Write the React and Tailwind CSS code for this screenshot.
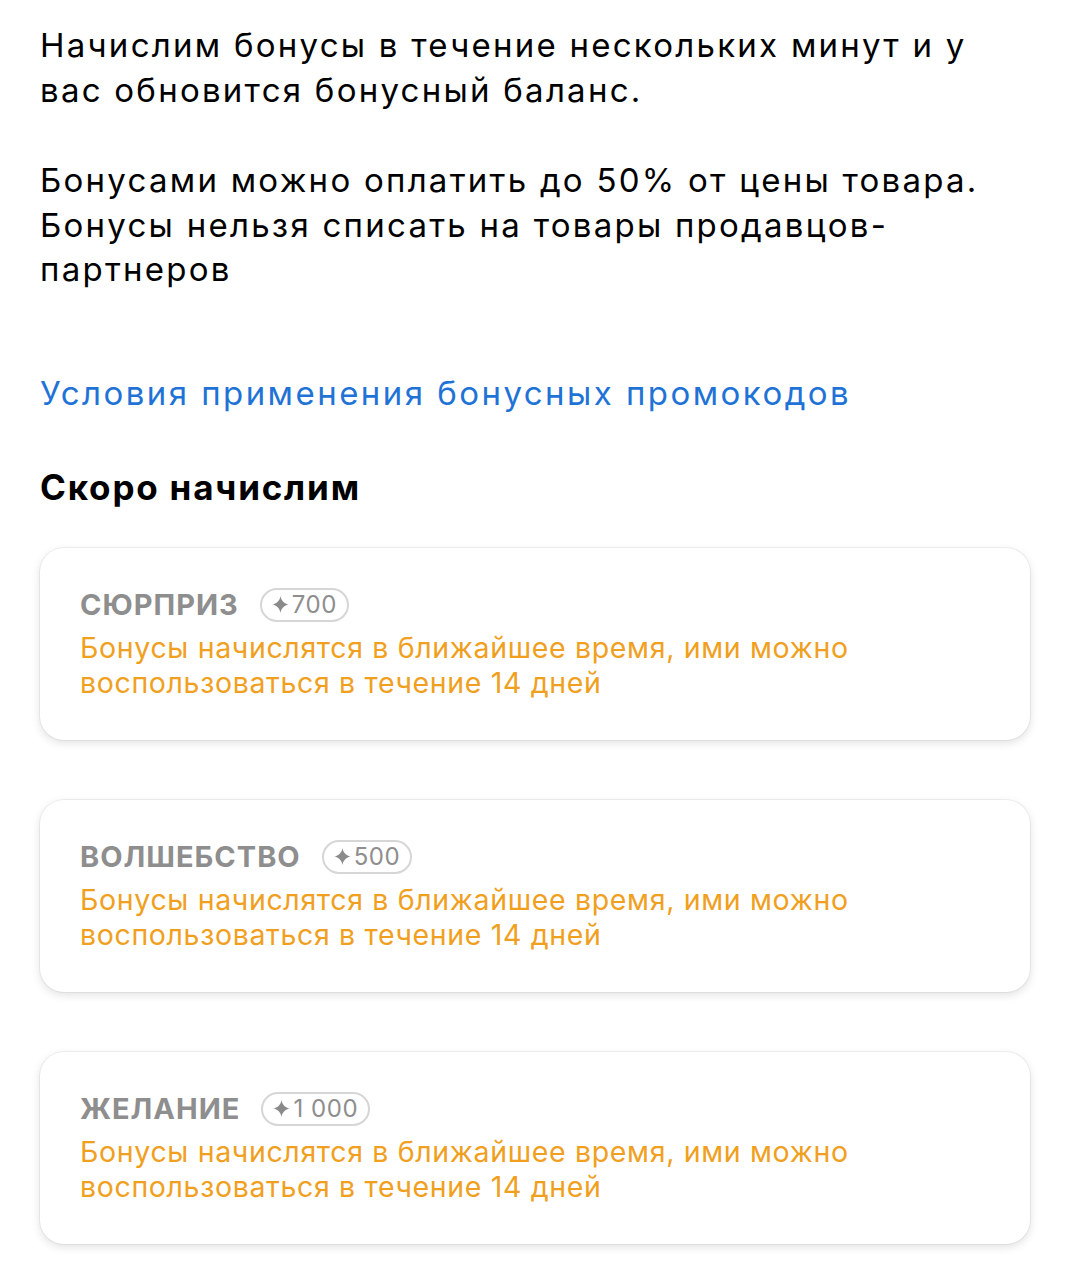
import React from "react";

const cards = [
  { title: "СЮРПРИЗ", amount: "700" },
  { title: "ВОЛШЕБСТВО", amount: "500" },
  { title: "ЖЕЛАНИЕ", amount: "1 000" },
];

function Star() {
  return (
    <svg width="17" height="17" viewBox="0 0 20 20" className="mr-[3px]">
      <path
        d="M10 0 C10.8 5.5 14.5 9.2 20 10 C14.5 10.8 10.8 14.5 10 20 C9.2 14.5 5.5 10.8 0 10 C5.5 9.2 9.2 5.5 10 0 Z"
        fill="#8a8a8a"
      />
    </svg>
  );
}

function Card({ title, amount }) {
  return (
    <div className="rounded-[24px] bg-white px-10 pt-10 pb-10 shadow-[0_3px_10px_rgba(0,0,0,0.12),0_0_0_1px_rgba(0,0,0,0.05)]">
      <div className="flex items-center gap-[21px] h-[34px]">
        <span className="text-[29px] font-bold text-[#8e8e8e] tracking-[1px]">{title}</span>
        <span className="flex items-center h-[34px] pl-[10px] pr-[10px] rounded-full border-2 border-[#d6d6d6] text-[24px] text-[#8e8e8e] tracking-[0.6px]">
          <Star />
          {amount}
        </span>
      </div>
      <div className="mt-[8px] text-[28.5px] leading-[35px] text-[#f0a01e] tracking-[0.65px]">
        Бонусы начислятся в ближайшее время, ими можно
        <br />
        воспользоваться в течение 14 дней
      </div>
    </div>
  );
}

export default function App() {
  return (
    <div
      className="w-[1070px] min-h-[1280px] bg-white px-10 pt-[23px] text-black"
      style={{ fontFamily: "Inter, 'Noto Sans', sans-serif" }}
    >
      <p className="text-[33px] leading-[44.5px] tracking-[2.25px]">
        Начислим бонусы в течение нескольких минут и у
        <br />
        вас обновится бонусный баланс.
      </p>
      <p className="mt-[46px] text-[33px] leading-[44.5px] tracking-[2.25px]">
        Бонусами можно оплатить до 50% от цены товара.
        <br />
        Бонусы нельзя списать на товары продавцов-
        <br />
        партнеров
      </p>
      <div className="mt-[79px] text-[33px] leading-[44px] text-[#1f73d6] tracking-[2.45px]">
        Условия применения бонусных промокодов
      </div>
      <h2 className="mt-[50px] text-[35px] leading-[44px] font-bold tracking-[1.8px]">
        Скоро начислим
      </h2>
      <div className="mt-[39px] w-[990px] flex flex-col gap-[60px]">
        {cards.map((c) => (
          <Card key={c.title} {...c} />
        ))}
      </div>
    </div>
  );
}
